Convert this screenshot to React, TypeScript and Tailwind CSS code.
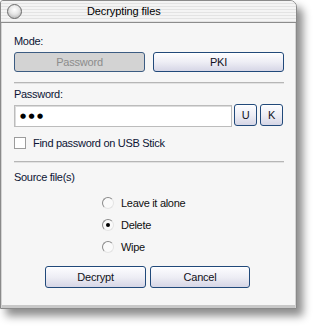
const font = "font-['Liberation_Sans',Arial,sans-serif]";

function Btn({ label, className = "" }: { label: string; className?: string }) {
  return (
    <button
      className={`flex items-center justify-center rounded-[3px] border border-[#21497a] bg-linear-to-b from-[#fdfdff] via-[#eeeef5] to-[#d6d6e6] text-[11px] tracking-[-0.2px] text-[#101020] shadow-[inset_0_1px_0_#ffffff] ${className}`}
    >
      {label}
    </button>
  );
}

function Radio({ label, checked = false }: { label: string; checked?: boolean }) {
  return (
    <div className="flex h-[22px] items-center">
      <span className="flex h-[12px] w-[12px] items-center justify-center rounded-full border border-[#8a8a8a] border-r-[#e4e4e4] border-b-[#e4e4e4] bg-[#fafafa]">
        {checked && <span className="h-[4px] w-[4px] rounded-full bg-black" />}
      </span>
      <span className="ml-[7px] text-[11px] leading-[13px] tracking-[-0.3px] text-[#101010]">{label}</span>
    </div>
  );
}

function Separator() {
  return <div className="h-[2px] w-[270px] border-t border-[#b6b6b6] border-b border-b-[#e2e2e2]" />;
}

export default function App() {
  return (
    <div className={`${font} h-[326px] w-[313px] bg-white`}>
      <div className="flex h-[309px] w-[297px] flex-col rounded-tr-[7px] rounded-tl-[3px] border border-[#8a8a8a] bg-[#f6f6f6] shadow-[6px_7px_8px_rgba(0,0,0,0.45)]">
        {/* title bar */}
        <div className="flex h-[22px] items-center rounded-tr-[6px] rounded-tl-[2px] border-b border-[#8c8c8c] bg-[repeating-linear-gradient(180deg,#f4f4f4_0px,#f4f4f4_2px,#e3e3e3_2px,#e3e3e3_3px)]">
          <span className="ml-[6px] h-[15px] w-[15px] rounded-full border border-[#6a6a6a] bg-[radial-gradient(circle_at_50%_35%,#ffffff_0%,#e6e6e6_45%,#a4a4a4_100%)]" />
          <span className="ml-[65px] text-[11px] leading-[13px] tracking-[-0.1px] text-black">Decrypting files</span>
        </div>

        {/* body */}
        <div className="flex flex-1 flex-col pl-[13px] shadow-[inset_1px_0_0_#d4d4d4,inset_-1px_0_0_#d4d4d4,inset_0_-3px_0_#c8c8c8]">
          <div className="mt-[12px] text-[11px] leading-[13px] tracking-[-0.3px] text-[#0c1434]">Mode:</div>
          <div className="mt-[4px] flex gap-[8px]">
            <button className="flex h-[20px] w-[131px] items-center justify-center rounded-[3px] border border-[#3c5c82] bg-[#d3d3d3] text-[11px] tracking-[-0.2px] text-[#8c8c8c]">
              Password
            </button>
            <Btn label="PKI" className="h-[20px] w-[131px]" />
          </div>

          <div className="mt-[10px]">
            <Separator />
          </div>

          <div className="mt-[4px] text-[11px] leading-[13px] tracking-[-0.3px] text-[#0c1434]">Password:</div>
          <div className="mt-[3px] flex items-start">
            <div className="mt-[1px] flex h-[22px] w-[218px] items-center border border-[#bcbcbc] bg-white pl-[5px] shadow-[inset_1px_1px_0_#dcdcdc]">
              <span className="font-['DejaVu_Sans',sans-serif] text-[7px] leading-none tracking-[2.4px] text-black">●●●</span>
            </div>
            <Btn label="U" className="ml-[2px] h-[22px] w-[23px]" />
            <Btn label="K" className="ml-[3px] h-[22px] w-[23px]" />
          </div>

          <div className="mt-[10px] flex h-[12px] items-center">
            <span className="h-[12px] w-[12px] border border-[#9c9c9c] bg-white" />
            <span className="ml-[7px] text-[11px] leading-[13px] tracking-[-0.3px] text-[#0c1434]">Find password on USB Stick</span>
          </div>

          <div className="mt-[12px]">
            <Separator />
          </div>

          <div className="mt-[8px] text-[11px] leading-[13px] tracking-[-0.3px] text-[#0c1434]">Source file(s)</div>

          <div className="ml-[88px] mt-[8px] flex flex-col">
            <Radio label="Leave it alone" />
            <Radio label="Delete" checked />
            <Radio label="Wipe" />
          </div>

          <div className="ml-[31px] mt-[8px] flex gap-[4px]">
            <Btn label="Decrypt" className="h-[22px] w-[101px]" />
            <Btn label="Cancel" className="h-[22px] w-[100px]" />
          </div>
        </div>
      </div>
    </div>
  );
}
